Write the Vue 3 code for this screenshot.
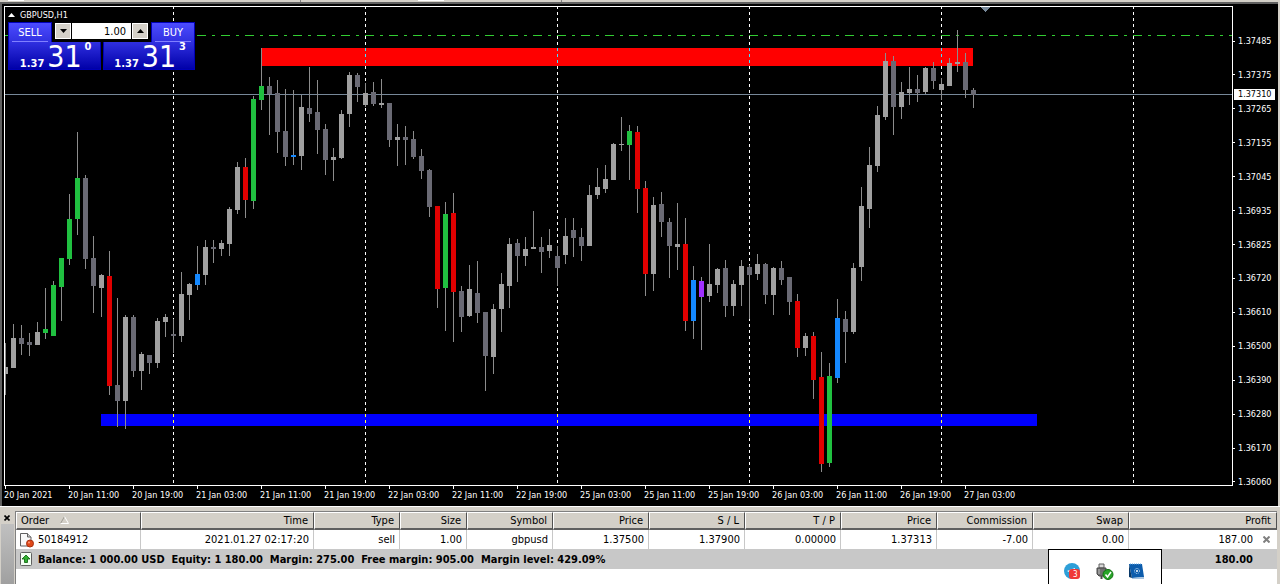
<script setup>
import { ref } from 'vue'

const volume = ref('1.00')

const colors = {
    L: '#a0a0a0',
    D: '#6a6a74',
    G: '#20c040',
    R: '#e00000',
    B: '#1488ff',
    P: '#a030ff'
}

// one row per bar: high, body top, body bottom, low, colour
const bars = [
    [343, 367, 374, 395, 'L'], [324, 338, 368, 368, 'L'], [325, 338, 344, 355, 'D'], [333, 342, 345, 356, 'D'],
    [322, 332, 345, 345, 'L'], [288, 329, 333, 339, 'G'], [281, 285, 336, 336, 'G'], [258, 258, 287, 321, 'G'],
    [194, 219, 259, 265, 'G'], [132, 178, 219, 235, 'G'], [175, 178, 259, 269, 'D'], [236, 258, 286, 313, 'D'],
    [274, 275, 288, 317, 'L'], [251, 276, 386, 395, 'R'], [298, 385, 401, 427, 'D'], [315, 317, 401, 429, 'L'],
    [315, 317, 371, 377, 'D'], [352, 354, 371, 390, 'L'], [355, 355, 363, 374, 'D'], [318, 321, 363, 368, 'L'],
    [314, 317, 322, 337, 'L'], [319, 334, 336, 353, 'D'], [272, 294, 336, 342, 'L'], [283, 284, 295, 320, 'L'],
    [246, 274, 285, 290, 'B'], [240, 247, 275, 285, 'L'], [240, 247, 249, 263, 'D'], [240, 243, 249, 256, 'L'],
    [207, 209, 244, 256, 'L'], [162, 167, 210, 214, 'L'], [158, 167, 200, 218, 'R'], [96, 99, 201, 209, 'G'],
    [48, 86, 100, 110, 'G'], [77, 86, 94, 135, 'D'], [80, 93, 132, 153, 'D'], [89, 131, 157, 166, 'D'],
    [90, 155, 157, 165, 'B'], [95, 107, 156, 170, 'L'], [67, 108, 114, 122, 'D'], [80, 112, 130, 154, 'D'],
    [124, 129, 160, 175, 'D'], [148, 157, 160, 181, 'L'], [110, 114, 158, 159, 'L'], [72, 75, 114, 127, 'L'],
    [73, 75, 87, 102, 'D'], [83, 93, 105, 107, 'L'], [82, 92, 104, 106, 'D'], [79, 103, 105, 108, 'L'],
    [103, 103, 140, 147, 'D'], [124, 137, 140, 166, 'L'], [126, 137, 140, 165, 'D'], [131, 139, 157, 159, 'D'],
    [149, 156, 171, 179, 'D'], [169, 170, 207, 217, 'D'], [206, 206, 289, 308, 'R'], [202, 214, 288, 331, 'G'],
    [193, 213, 292, 342, 'R'], [286, 291, 317, 332, 'D'], [265, 289, 316, 317, 'L'], [261, 293, 313, 323, 'D'],
    [312, 312, 356, 391, 'D'], [304, 309, 357, 374, 'L'], [273, 284, 309, 332, 'L'], [238, 244, 286, 308, 'L'],
    [239, 243, 256, 282, 'D'], [237, 249, 256, 266, 'L'], [211, 247, 249, 249, 'L'], [237, 247, 252, 273, 'D'],
    [229, 245, 251, 258, 'L'], [246, 256, 268, 286, 'D'], [218, 236, 255, 264, 'L'], [218, 230, 238, 257, 'D'],
    [228, 237, 246, 261, 'D'], [185, 195, 246, 246, 'L'], [168, 187, 195, 199, 'L'], [165, 179, 189, 193, 'L'],
    [143, 144, 180, 180, 'L'], [117, 144, 145, 151, 'L'], [125, 131, 145, 180, 'G'], [126, 132, 189, 213, 'R'],
    [181, 188, 274, 296, 'R'], [197, 205, 274, 291, 'L'], [192, 204, 222, 237, 'D'], [218, 222, 246, 278, 'D'],
    [203, 244, 247, 270, 'L'], [218, 244, 321, 331, 'R'], [266, 280, 321, 339, 'B'], [277, 281, 297, 350, 'P'],
    [244, 284, 296, 302, 'L'], [268, 269, 285, 293, 'L'], [260, 268, 306, 317, 'D'], [280, 284, 306, 316, 'L'],
    [260, 266, 285, 306, 'L'], [265, 267, 275, 319, 'D'], [254, 264, 274, 280, 'L'], [263, 264, 295, 304, 'D'],
    [267, 268, 295, 315, 'L'], [261, 268, 280, 285, 'D'], [277, 277, 302, 315, 'D'], [294, 301, 348, 357, 'R'],
    [333, 336, 348, 356, 'L'], [332, 336, 380, 399, 'R'], [352, 377, 464, 472, 'R'], [363, 376, 463, 467, 'G'],
    [299, 318, 378, 383, 'B'], [311, 319, 332, 363, 'D'], [263, 268, 332, 334, 'L'], [187, 206, 267, 281, 'L'],
    [147, 165, 209, 228, 'L'], [106, 115, 166, 172, 'L'], [53, 61, 117, 120, 'L'], [56, 61, 107, 135, 'D'],
    [82, 92, 107, 119, 'L'], [67, 89, 93, 105, 'L'], [75, 89, 93, 102, 'D'], [67, 68, 92, 94, 'L'],
    [62, 68, 81, 89, 'D'], [78, 84, 90, 100, 'L'], [58, 63, 86, 86, 'L'], [30, 62, 64, 72, 'L'],
    [53, 62, 90, 98, 'D'], [88, 90, 95, 108, 'D']
]

const candles = bars.map(([high, top, bottom, low, color], i) => ({
    x: 5 + i * 8,
    high,
    top,
    wick: low - high,
    body: bottom - top,
    fill: colors[color]
}))

const sessions = [173, 365, 557, 749, 941, 1133]

const prices = [
    '1.37485', '1.37375', '1.37265', '1.37155', '1.37045', '1.36935', '1.36825',
    '1.36720', '1.36610', '1.36500', '1.36390', '1.36280', '1.36170', '1.36060'
]

const times = [
    '20 Jan 2021', '20 Jan 11:00', '20 Jan 19:00', '21 Jan 03:00', '21 Jan 11:00', '21 Jan 19:00',
    '22 Jan 03:00', '22 Jan 11:00', '22 Jan 19:00', '25 Jan 03:00', '25 Jan 11:00', '25 Jan 19:00',
    '26 Jan 03:00', '26 Jan 11:00', '26 Jan 19:00', '27 Jan 03:00'
]

const headers = ['Time', 'Type', 'Size', 'Symbol', 'Price', 'S / L', 'T / P', 'Price', 'Commission', 'Swap']
const order = ['2021.01.27 02:17:20', 'sell', '1.00', 'gbpusd', '1.37500', '1.37900', '0.00000', '1.37313', '-7.00', '0.00']

const step = (amount) => {
    volume.value = Math.max(0.01, Number(volume.value) + amount).toFixed(2)
}
</script>

<template>
    <div class="app">
        <div class="toolbar">
            <div class="toolbar__group toolbar__group--first"><span class="toolbar__tab"></span></div>
            <div class="toolbar__group"><span class="toolbar__tab toolbar__tab--wide"></span></div>
        </div>

        <main class="chart">
            <div class="chart__row">
                <div class="plot">
                    <svg class="plot__svg" aria-label="GBPUSD chart">
                        <g transform="translate(-5 -7)" shape-rendering="crispEdges">
                            <line class="ask" x1="5" y1="35.5" x2="4000" y2="35.5" />
                            <rect x="261" y="48" width="712" height="18" fill="#ff0000" />
                            <rect x="101" y="414" width="936" height="12" fill="#0000ff" />
                            <g v-for="x in sessions" :key="x" class="session">
                                <line :x1="x + 0.5" y1="6" :x2="x + 0.5" y2="485" stroke="#ffffff" />
                                <line v-if="x > 261 && x < 973" :x1="x + 0.5" y1="48" :x2="x + 0.5" y2="66" stroke="#40e0ff" />
                                <line v-if="x < 1037" :x1="x + 0.5" y1="414" :x2="x + 0.5" y2="426" stroke="#ffff40" />
                            </g>
                            <rect x="5" y="94" width="4000" height="1" fill="#778899" />
                            <g v-for="c in candles" :key="c.x">
                                <rect :x="c.x" :y="c.high" width="1" :height="c.wick" fill="#8c8c8c" />
                                <rect :x="c.x - 2" :y="c.top" width="5" :height="c.body" :fill="c.fill" />
                            </g>
                            <path d="M981 7h9v1h-1v1h-1v1h-1v1h-1v1h-1v-1h-1v-1h-1v-1h-1v-1h-1z" fill="#778899" />
                        </g>
                    </svg>

                    <section class="trade">
                        <h1 class="trade__title">
                            <svg width="7" height="4" viewBox="0 0 7 4"><path d="M0 4L3.500 0L7 4z" fill="#ffffff" /></svg>
                            GBPUSD,H1
                        </h1>
                        <div class="trade__top">
                            <button class="trade__btn" type="button">SELL</button>
                            <div class="volume">
                                <button type="button" class="volume__btn" aria-label="Decrease volume" @click="step(-0.01)">
                                    <svg width="7" height="4" viewBox="0 0 7 4"><path d="M0 0h7L3.500 4z" /></svg>
                                </button>
                                <input v-model="volume" class="volume__input" type="text" aria-label="Volume">
                                <button type="button" class="volume__btn" aria-label="Increase volume" @click="step(0.01)">
                                    <svg width="7" height="4" viewBox="0 0 7 4"><path d="M0 4h7L3.500 0z" /></svg>
                                </button>
                            </div>
                            <button class="trade__btn" type="button">BUY</button>
                        </div>
                        <div class="trade__quotes">
                            <p class="quote"><b>1.37</b><span class="quote__big">31</span><b class="quote__sup">0</b></p>
                            <p class="quote"><b>1.37</b><span class="quote__big">31</span><b class="quote__sup">3</b></p>
                        </div>
                    </section>
                </div>
                <div class="prices">
                    <ul class="prices__list">
                        <li v-for="price in prices" :key="price">{{ price }}</li>
                    </ul>
                    <span class="prices__current">1.37310</span>
                </div>
            </div>
            <ul class="times">
                <li v-for="time in times" :key="time">{{ time }}</li>
            </ul>
        </main>

        <section class="terminal">
            <div class="terminal__side">
                <button class="terminal__close" type="button" aria-label="Close terminal">
                    <svg width="6" height="6" viewBox="0 0 6 6"><path d="M0.500 0.500l5 5M5.500 0.500l-5 5" stroke="#000000" stroke-width="1.600" /></svg>
                </button>
                <div class="terminal__grip"></div>
            </div>
            <div class="terminal__body">
                <table class="orders">
                    <colgroup>
                        <col class="col--order"><col class="col--time"><col class="col--type"><col class="col--size">
                        <col class="col--type"><col v-for="n in 6" :key="n" class="col--price"><col>
                    </colgroup>
                    <thead>
                        <tr>
                            <th class="orders__first">
                                Order
                                <svg class="orders__sort" width="9" height="8" viewBox="0 0 9 8">
                                    <path d="M0.500 7.500L4.500 0.500" stroke="#9c9a94" fill="none" />
                                    <path d="M4.500 0.500L8.500 7.500H0.500" stroke="#ffffff" fill="none" />
                                </svg>
                            </th>
                            <th v-for="(header, i) in headers" :key="i">{{ header }}</th>
                            <th>Profit</th>
                        </tr>
                    </thead>
                    <tbody>
                        <tr>
                            <td class="orders__first">
                                <span class="orders__id">
                                    <svg width="14" height="16" viewBox="0 0 14 16">
                                        <path d="M0.500 1.500h7l3.500 3.500v9h-10.500z" fill="#f8f8f8" stroke="#606060" />
                                        <path d="M7.500 1.500v3.500h3.500" fill="#d0d0d0" stroke="#606060" />
                                        <circle cx="10" cy="11.500" r="3.500" fill="#e04818" stroke="#a83010" />
                                        <circle cx="9" cy="10.500" r="1" fill="#ff9878" />
                                    </svg>
                                    50184912
                                </span>
                            </td>
                            <td v-for="(value, i) in order" :key="i">{{ value }}</td>
                            <td class="orders__profit">
                                187.00
                                <button class="orders__close" type="button" aria-label="Close order">
                                    <svg width="7" height="7" viewBox="0 0 7 7"><path d="M0.500 0.500l6 6M6.500 0.500l-6 6" stroke="#808080" stroke-width="2" /></svg>
                                </button>
                            </td>
                        </tr>
                        <tr class="summary">
                            <td colspan="11" class="orders__first">
                                <span class="orders__id">
                                    <svg width="14" height="16" viewBox="0 0 14 16">
                                        <rect x="0.500" y="1.500" width="11" height="13" rx="1" fill="#f4fff4" stroke="#606060" />
                                        <path d="M6 4l4 4h-2.500v3.500h-3v-3.500h-2.500z" fill="#30b030" stroke="#086008" stroke-width="0.800" />
                                    </svg>
                                    Balance: 1 000.00 USD&nbsp; Equity: 1 180.00&nbsp; Margin: 275.00&nbsp; Free margin: 905.00&nbsp; Margin level: 429.09%
                                </span>
                            </td>
                            <td class="orders__profit">180.00</td>
                        </tr>
                    </tbody>
                </table>
            </div>
        </section>

        <aside class="tray">
            <svg width="18" height="18" viewBox="0 0 18 18">
                <circle cx="8" cy="8" r="8" fill="#2e9fd8" />
                <path d="M3 8l8-3v2l-4 3z" fill="#ffffff" />
                <rect x="5" y="6" width="11" height="10" rx="3" fill="#f03838" />
                <text x="9" y="14" class="tray__badge">3</text>
            </svg>
            <svg width="18" height="18" viewBox="0 0 18 18">
                <path d="M3 1h5v4h-5z" fill="#d8d8d8" stroke="#606060" />
                <path d="M1 5h9v6l-2 2h-5l-2-2z" fill="#707070" stroke="#484848" />
                <path d="M3 6v5" stroke="#c0c0c0" />
                <path d="M5.500 13v3" stroke="#484848" stroke-width="2" />
                <circle cx="12" cy="11.500" r="5" fill="#28a428" stroke="#107010" />
                <path d="M9.500 11.500l2 2.500l3.500-5" fill="none" stroke="#ffffff" stroke-width="1.500" />
            </svg>
            <svg width="18" height="18" viewBox="0 0 18 18">
                <path d="M1 1h13l2 13-12 1z" fill="#0c5cac" />
                <path d="M1 1l3 14-3-1z" fill="#083868" />
                <path d="M4 15l12-1v2l-12 0z" fill="#a8c4e0" />
                <path d="M2 1h12" stroke="#60a8e8" stroke-dasharray="1 1" />
                <circle cx="9" cy="8" r="2.500" fill="none" stroke="#c8e4ff" stroke-dasharray="1 1" />
                <circle cx="9" cy="8" r="1" fill="#ffffff" />
            </svg>
        </aside>
    </div>
</template>

<style>
body{
    margin: 0;
    background-color: #d4d0c8;
}
</style>

<style scoped>
.app{
    position: relative;
    display: flex;
    flex-direction: column;
    min-height: 100vh;
    overflow: hidden;
    background-color: #d4d0c8;
    font-family: 'DejaVu Sans Condensed', 'DejaVu Sans', sans-serif;
    font-size: 11px;
    color: #000000;
}

button{
    font-family: inherit;
    font-size: 11px;
    padding: 0;
    border: none;
    background: none;
}

ul{
    list-style: none;
    margin: 0;
    padding: 0;
}

.toolbar{
    display: flex;
    height: 2px;
}

.toolbar__group{
    display: flex;
    justify-content: center;
    width: 260px;
    border-right: 1px solid #808080;
}

.toolbar__group--first{
    justify-content: flex-start;
    width: 292px;
    padding-left: 8px;
}

.toolbar__tab{
    width: 16px;
    height: 1px;
    background-color: #ffffff;
}

.toolbar__tab--wide{
    width: 26px;
}

/* chart */
.chart{
    margin-right: 2px;
    padding: 2px 0 0 2px;
    border-top: 2px solid #606060;
    border-left: 2px solid #606060;
    background-color: #000000;
    color: #ffffff;
    font-size: 9px;
}

.chart__row{
    display: flex;
    height: 480px;
}

.plot{
    position: relative;
    flex: 1;
    min-width: 0;
    border: 1px solid #ffffff;
}

.plot__svg{
    display: block;
    width: 100%;
    height: 100%;
}

.ask{
    stroke: #32cd32;
    stroke-dasharray: 9 6 3 6;
}

.session line{
    stroke-dasharray: 3 3;
}

.prices{
    position: relative;
    width: 45px;
}

.prices__list{
    display: flex;
    flex-direction: column;
    justify-content: space-between;
    height: 453px;
    padding-top: 29px;
}

.prices__list li{
    display: flex;
    align-items: center;
    gap: 3px;
    line-height: 12px;
}

.prices__list li::before{
    content: '';
    width: 2px;
    height: 1px;
    background-color: #ffffff;
}

.prices__current{
    position: absolute;
    top: 83px;
    left: 1px;
    width: 37px;
    padding-left: 4px;
    line-height: 11px;
    background-color: #ffffff;
    color: #000000;
}

.times{
    display: flex;
    height: 20px;
    overflow: hidden;
}

.times li{
    flex: 0 0 64px;
    line-height: 12px;
    white-space: nowrap;
}

.times li::before{
    content: '';
    display: block;
    width: 1px;
    height: 3px;
    margin-left: 1px;
    background-color: #ffffff;
}

/* one click trading */
.trade{
    position: absolute;
    top: 1px;
    left: 3px;
    width: 187px;
}

.trade__title{
    display: flex;
    align-items: center;
    gap: 5px;
    height: 14px;
    margin: 0;
    font-size: 9px;
    font-weight: normal;
}

.trade__top{
    display: flex;
    justify-content: space-between;
    height: 20px;
    background-color: #000000;
}

.trade__btn{
    position: relative;
    width: 44px;
    border: 1px solid #0000b8;
    border-bottom: none;
    background-image: linear-gradient(#4c4cff, #3030e0);
    color: #ffffff;
}

.trade__btn::after{
    content: '';
    position: absolute;
    left: 3px;
    right: 3px;
    bottom: 0;
    height: 1px;
    background-color: #8080ff;
}

.volume{
    display: flex;
    gap: 1px;
    height: 16px;
    margin-top: 1px;
}

.volume__btn{
    display: flex;
    align-items: center;
    justify-content: center;
    width: 16px;
    background-color: #d4d0c8;
    border: 1px solid #ffffff;
}

.volume__input{
    box-sizing: border-box;
    width: 59px;
    padding: 0 5px;
    border: none;
    background-color: #ffffff;
    font-family: inherit;
    font-size: 11px;
    text-align: right;
}

.trade__quotes{
    display: flex;
    gap: 2px;
    background-color: #000000;
}

.quote{
    box-sizing: border-box;
    flex: 1;
    display: flex;
    align-items: flex-end;
    justify-content: flex-end;
    gap: 3px;
    height: 28px;
    margin: 0;
    padding: 0 8px 0 0;
    border: 1px solid #0000b8;
    border-top: none;
    background-image: linear-gradient(#3030e0, #0000a8);
    font-size: 11px;
    line-height: 10px;
}

.quote__big{
    font-size: 30px;
    line-height: 24px;
}

.quote__sup{
    align-self: flex-start;
}

/* terminal */
.terminal{
    flex: 1;
    display: flex;
    padding: 4px 3px 0 1px;
    border-top: 1px solid #ffffff;
}

.terminal__side{
    display: flex;
    flex-direction: column;
    width: 14px;
}

.terminal__close{
    display: flex;
    justify-content: center;
    align-items: center;
    width: 12px;
    height: 13px;
}

.terminal__grip{
    flex: 1;
    width: 13px;
    background-image: linear-gradient(#c0c0c0, #a0a0a0);
}

.terminal__body{
    flex: 1;
    min-width: 0;
    border-top: 1px solid #808080;
    border-left: 1px solid #808080;
    background-color: #ffffff;
}

.orders{
    width: 100%;
    table-layout: fixed;
    border-collapse: separate;
    border-spacing: 0;
    white-space: nowrap;
}

.col--order{ width: 125px; }
.col--time{ width: 173px; }
.col--type{ width: 86px; }
.col--size{ width: 67px; }
.col--price{ width: 96px; }

.orders th{
    height: 14px;
    padding: 1px 5px 0;
    border: 1px solid #ffffff;
    border-right: 1px solid #505050;
    border-bottom: 2px solid #606060;
    background-color: #d4d0c8;
    font-weight: normal;
    line-height: 14px;
    text-align: right;
}

.orders td{
    height: 19px;
    padding: 0 4px;
    border-right: 1px solid #c8c8c8;
    line-height: 19px;
    text-align: right;
}

.orders .orders__first{
    padding-left: 4px;
    text-align: left;
}

.orders__sort{
    margin-left: 8px;
}

.orders__id{
    display: flex;
    align-items: center;
    gap: 4px;
}

.orders .orders__profit{
    position: relative;
    padding-right: 24px;
    border-right: none;
}

.orders__close{
    position: absolute;
    top: 6px;
    right: 7px;
    display: flex;
}

.summary{
    background-color: #c8c8c8;
    font-weight: bold;
}

.orders .summary td{
    height: 20px;
    border-right: none;
}

/* tray popup */
.tray{
    position: absolute;
    right: 118px;
    bottom: 0;
    display: flex;
    gap: 14px;
    height: 21px;
    padding: 13px 15px 0;
    border: 1px solid #000000;
    border-bottom: none;
    background-color: #ffffff;
}

.tray__badge{
    font-size: 8px;
    fill: #ffffff;
}
</style>
